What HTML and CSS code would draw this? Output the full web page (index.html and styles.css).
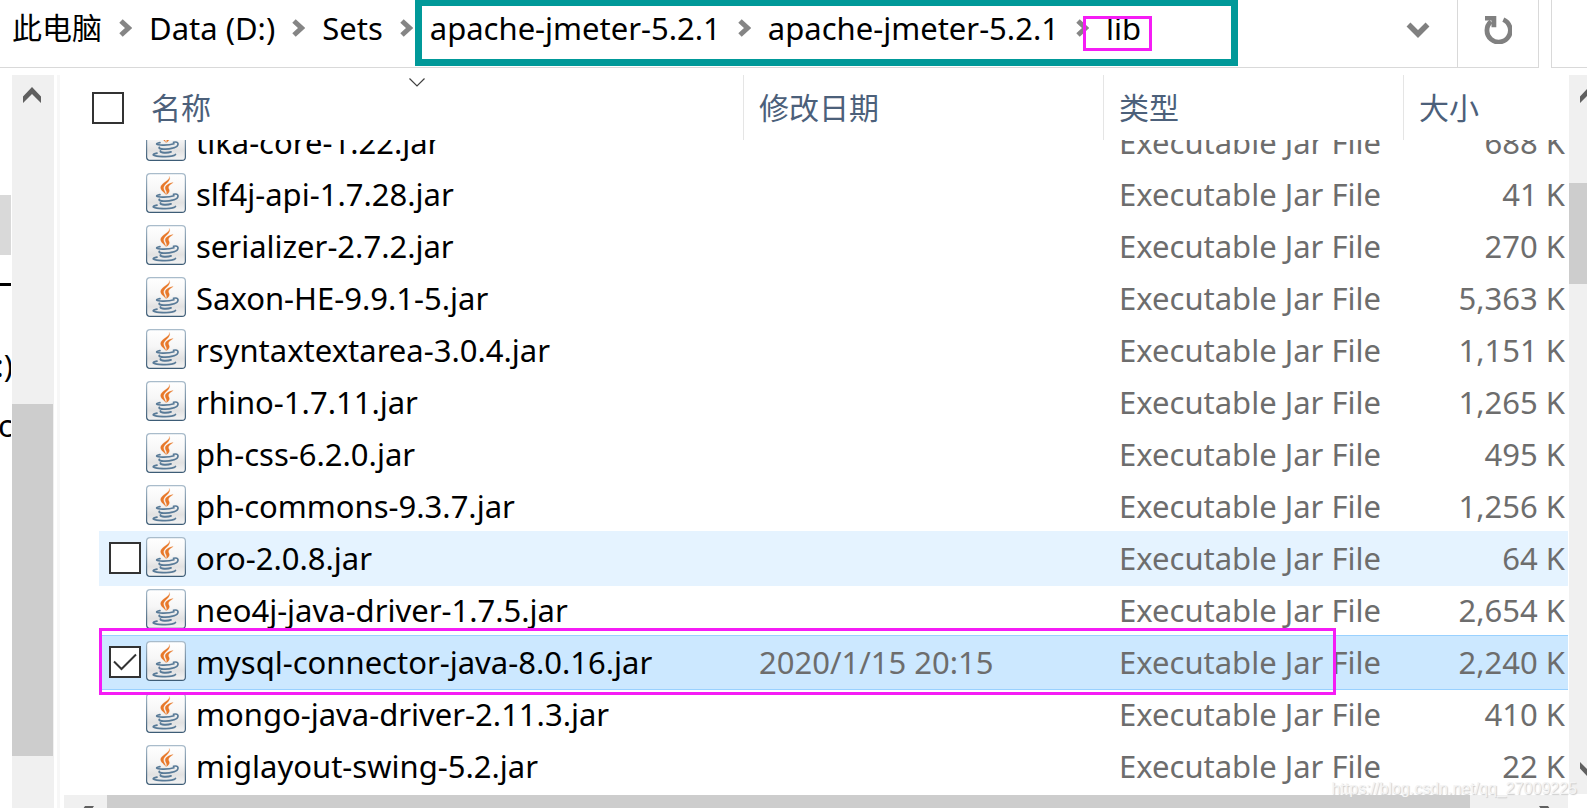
FILE: index.html
```html
<!DOCTYPE html>
<html lang="zh-CN">
<head>
<meta charset="utf-8">
<title>lib</title>
<link rel="stylesheet" href="styles.css">
</head>
<body>
<svg class="defs" aria-hidden="true">
  <defs>
    <linearGradient id="tile" x1="0" y1="0" x2="0" y2="1"><stop offset="0" stop-color="#ffffff"/><stop offset=".45" stop-color="#f6f6f6"/><stop offset=".75" stop-color="#e2e2e2"/><stop offset="1" stop-color="#f4f4f4"/></linearGradient>
    <linearGradient id="edge" x1="0" y1="0" x2="0" y2="1"><stop offset="0" stop-color="#a9bccb"/><stop offset="1" stop-color="#3d5c76"/></linearGradient>
    <symbol id="jar" viewBox="0 0 40 40">
      <rect x=".6" y=".6" width="38.8" height="38.8" rx="3.5" fill="url(#tile)" stroke="url(#edge)" stroke-width="1.2"/>
      <g fill="#e8782a" stroke="#e8782a" stroke-width=".2">
        <path d="M23.300 3.400c1.400 3.900-8.700 6.600-8.700 11 0 3 3.400 4.500 5.300 7.200-.9-3.200-2.500-4.900-2.300-7 .4-3.600 7.900-6.500 5.700-11.200z"/>
        <path d="M27.200 9.600c-4 .6-8 2.700-8 5.500 0 2.200 2.300 3.200 1.200 6.500 2.700-1.700 3.700-3.600 2.500-5.700-1.400-2.500 1.200-4.200 4.300-6.300z"/>
      </g>
      <g fill="none" stroke="#587a97" stroke-linecap="round">
        <path d="M14 21.600c-5.500 1-4 2.300 2.500 2.500 5 .1 8.500-.3 11.500-1.300" stroke-width="1.600"/>
        <path d="M27.500 21.300c5.800-1.600 6.200 4 .2 5.600" stroke-width="1.700"/>
        <path d="M13.300 26.400c-1 1.900 8 2.300 13.200.8" stroke-width="1.900"/>
        <path d="M14.500 30.100c-.8 1.900 7 2.200 10.500.8" stroke-width="1.900"/>
        <path d="M11 32.200c-6 1.100-4.500 2.800 2 3.200 6.500.4 15.500 0 16.500-2" stroke-width="1.700"/>
      </g>
    </symbol>
    <symbol id="crumb" viewBox="0 0 13 18"><path d="M2 2l7.500 7L2 16" fill="none" stroke="#858585" stroke-width="5"/></symbol>
    <symbol id="arrow" viewBox="0 0 18 16"><path d="M0 9.500L9 0l9 9.500V16L9 7l-9 9z" fill="#606060"/></symbol>
  </defs>
</svg>

<div class="window">
  <header class="toolbar">
    <nav class="address" aria-label="地址">
      <a href="#">此电脑</a><svg class="sep"><use href="#crumb"/></svg>
      <a href="#">Data (D:)</a><svg class="sep"><use href="#crumb"/></svg>
      <a href="#">Sets</a><svg class="sep"><use href="#crumb"/></svg>
      <a href="#">apache-jmeter-5.2.1</a><svg class="sep"><use href="#crumb"/></svg>
      <a href="#">apache-jmeter-5.2.1</a><svg class="sep"><use href="#crumb"/></svg>
      <a href="#">lib</a>
      <button class="history" type="button" aria-label="以前的位置"><svg width="24" height="17" viewBox="0 0 24 17"><path d="M2.500 2.500l9.500 9.500 9.500-9.500" fill="none" stroke="#808080" stroke-width="5.500"/></svg></button>
    </nav>
    <button class="refresh" type="button" aria-label="刷新"><svg width="28" height="28" viewBox="0 0 28 28"><path d="M19.300 3.600A11.700 11.700 0 1 1 7 5.500" fill="none" stroke="#808080" stroke-width="4.800"/><path d="M1 0h11.300v11.300H7.500V4.600H1z" fill="#808080"/></svg></button>
    <div class="search"></div>
  </header>

  <main class="content">
    <aside class="tree">
      <div class="tree-selected"></div>
      <div class="tree-line"></div>
      <div class="tree-label drive">:)</div>
      <div class="tree-label folder">c</div>
    </aside>
    <div class="vscroll left">
      <svg class="up" width="18" height="16"><use href="#arrow"/></svg>
      <div class="thumb"></div>
    </div>
    <div class="splitter"></div>

    <section class="files">
      <table>
        <thead>
          <tr>
            <th class="name"><input type="checkbox" aria-label="全选"><span>名称</span><svg class="sort" width="16" height="9" viewBox="0 0 16 9"><path d="M.5.500L8 8 15.500.5" fill="none" stroke="#404040" stroke-width="1.200"/></svg></th>
            <th>修改日期</th><th>类型</th><th>大小</th>
          </tr>
        </thead>
        <tbody>
          <tr><td class="name"><svg class="jar"><use href="#jar"/></svg>tika-core-1.22.jar</td><td></td><td>Executable Jar File</td><td class="size">688 K</td></tr>
          <tr><td class="name"><svg class="jar"><use href="#jar"/></svg>slf4j-api-1.7.28.jar</td><td></td><td>Executable Jar File</td><td class="size">41 K</td></tr>
          <tr><td class="name"><svg class="jar"><use href="#jar"/></svg>serializer-2.7.2.jar</td><td></td><td>Executable Jar File</td><td class="size">270 K</td></tr>
          <tr><td class="name"><svg class="jar"><use href="#jar"/></svg>Saxon-HE-9.9.1-5.jar</td><td></td><td>Executable Jar File</td><td class="size">5,363 K</td></tr>
          <tr><td class="name"><svg class="jar"><use href="#jar"/></svg>rsyntaxtextarea-3.0.4.jar</td><td></td><td>Executable Jar File</td><td class="size">1,151 K</td></tr>
          <tr><td class="name"><svg class="jar"><use href="#jar"/></svg>rhino-1.7.11.jar</td><td></td><td>Executable Jar File</td><td class="size">1,265 K</td></tr>
          <tr><td class="name"><svg class="jar"><use href="#jar"/></svg>ph-css-6.2.0.jar</td><td></td><td>Executable Jar File</td><td class="size">495 K</td></tr>
          <tr><td class="name"><svg class="jar"><use href="#jar"/></svg>ph-commons-9.3.7.jar</td><td></td><td>Executable Jar File</td><td class="size">1,256 K</td></tr>
          <tr class="hover"><td class="name"><input type="checkbox" aria-label="oro-2.0.8.jar"><svg class="jar"><use href="#jar"/></svg>oro-2.0.8.jar</td><td></td><td>Executable Jar File</td><td class="size">64 K</td></tr>
          <tr><td class="name"><svg class="jar"><use href="#jar"/></svg>neo4j-java-driver-1.7.5.jar</td><td></td><td>Executable Jar File</td><td class="size">2,654 K</td></tr>
          <tr class="selected"><td class="name"><span class="tick"><input type="checkbox" checked aria-label="mysql-connector-java-8.0.16.jar"><svg width="24" height="18" viewBox="0 0 24 18"><path d="M1 8.500l7.500 7.500L23 1.500" fill="none" stroke="#333" stroke-width="2"/></svg></span><svg class="jar"><use href="#jar"/></svg>mysql-connector-java-8.0.16.jar</td><td>2020/1/15 20:15</td><td>Executable Jar File</td><td class="size">2,240 K</td></tr>
          <tr><td class="name"><svg class="jar"><use href="#jar"/></svg>mongo-java-driver-2.11.3.jar</td><td></td><td>Executable Jar File</td><td class="size">410 K</td></tr>
          <tr><td class="name"><svg class="jar"><use href="#jar"/></svg>miglayout-swing-5.2.jar</td><td></td><td>Executable Jar File</td><td class="size">22 K</td></tr>
        </tbody>
      </table>
      <div class="hscroll">
        <svg width="18" height="16" viewBox="0 0 18 16"><path d="M3 0h9l-6 9 6 7H3L-3 9z" fill="#606060"/></svg>
        <div class="thumb"></div>
        <svg width="18" height="16" viewBox="0 0 18 16"><path d="M7 0h9l6 9-6 7H7l6-7z" fill="#606060"/></svg>
      </div>
    </section>

    <div class="vscroll right">
      <svg class="up" width="18" height="16"><use href="#arrow"/></svg>
      <div class="thumb"></div>
      <svg class="down" width="18" height="16"><use href="#arrow"/></svg>
    </div>
  </main>

  <div class="mark mark-path"></div>
  <div class="mark mark-lib"></div>
  <div class="mark mark-row"></div>
  <div class="watermark">https://blog.csdn.net/qq_27009225</div>
</div>
</body>
</html>
```

FILE: styles.css
```css
* { box-sizing: border-box; }

body {
  margin: 0;
  overflow: hidden;
  background: #fff;
  color: #000;
  font: 31px/40px "Noto Sans", "Noto Sans CJK SC", sans-serif;
}

button { padding: 0; border: 0; background: none; }
svg { display: block; flex: none; }
.defs { position: absolute; width: 0; height: 0; }

.window {
  position: relative;
  display: flex;
  flex-direction: column;
  height: 100vh;
  overflow: hidden;
}

/* Address bar */
.toolbar { display: flex; flex: none; height: 68px; }

.address {
  display: flex;
  flex: 1;
  align-items: center;
  gap: 17px;
  padding: 0 27px 11px 12px;
  border-bottom: 1px solid #d9d9d9;
  white-space: nowrap;
}
.address a { color: #000; text-decoration: none; }
.address a:first-child { font-size: 30px; }
.sep { width: 13px; height: 18px; margin-top: -1px; }
.history { margin: 4px 0 0 auto; }

.refresh {
  display: flex;
  justify-content: center;
  width: 82px;
  padding-top: 16px;
  border: solid #d9d9d9;
  border-width: 0 1px 1px;
}

.search {
  width: 36px;
  margin-left: 12px;
  border: solid #d9d9d9;
  border-width: 0 0 1px 1px;
}

/* Panes */
.content { display: flex; flex: 1; min-height: 0; padding-top: 7px; }

.tree { flex: none; width: 11px; margin-right: 1px; overflow: hidden; }
.tree-selected { height: 60px; margin-top: 120px; background: #d9d9d9; }
.tree-line { height: 3px; margin-top: 28px; background: #000; }
.tree-label { display: flex; justify-content: flex-end; margin-right: -2px; }
.drive { margin-top: 59px; }
.folder { margin-top: 20px; }

.vscroll { display: flex; flex: none; flex-direction: column; background: #f0f0f0; }
.vscroll .up { margin: 12px 0 0 11px; }
.vscroll .thumb { background: #cdcdcd; }
.left { width: 42px; }
.left .thumb { width: 41px; height: 352px; margin-top: 301px; }
.splitter { flex: none; width: 3px; margin: 0 4px 0 3px; background: #f7f7f7; }

.right { width: 18px; margin: 0 0 14px 1px; overflow: hidden; }
.right .thumb { height: 101px; margin-top: 80px; }
.right .down { margin: auto 0 16px 11px; transform: rotate(180deg); }

/* File list */
.files { display: flex; flex: 1; flex-direction: column; min-width: 0; }

table { display: block; flex: 1; min-height: 0; overflow: hidden; }
thead, tbody { display: block; }
tbody { overflow: hidden; }

tr { display: grid; grid-template-columns: 1fr 360px 300px 165px; }
th, td { display: flex; align-items: center; padding: 0 0 0 16px; white-space: nowrap; }

thead tr { height: 65px; }
th {
  padding-left: 15px;
  border-left: 1px solid #e5e5e5;
  color: #4c607a;
  font-size: 30px;
  font-weight: 400;
}
th.name { position: relative; gap: 27px; padding-left: 28px; border: 0; }
.sort { position: absolute; top: 3px; right: 318px; }

tbody tr {
  height: 55px;
  margin: 0 0 -3px 35px;
  border: solid transparent;
  border-width: 1px 0;
}
tbody tr:first-child { margin-top: -25px; }
td { color: #6d6d6d; padding-bottom: 2px; }
td.name { justify-content: flex-start; padding-left: 10px; color: #000; }
td.size { justify-content: flex-end; padding-right: 3px; }

.jar { width: 40px; height: 40px; margin: 0 10px 1px 37px; }
.hover .jar, .selected .jar { margin-left: 5px; }
.hover { background: #e5f3ff; }
.selected { border-color: #99d1ff; background: #cce8ff; }

input[type="checkbox"] {
  flex: none;
  width: 32px;
  height: 32px;
  margin: 0;
  border: 2px solid #333;
  background: #fff;
  appearance: none;
}
.tick { display: grid; place-items: center; }
.tick > * { grid-area: 1 / 1; }

.hscroll {
  display: flex;
  flex: none;
  justify-content: space-between;
  height: 13px;
  padding: 0 18px;
  overflow: hidden;
  background: #f0f0f0;
}
.hscroll svg { margin-top: 11px; }
.hscroll .thumb { flex: 1; margin: 0 62px 0 7px; background: #cdcdcd; }

/* Highlight frames drawn over the window */
.mark { position: absolute; pointer-events: none; border: 3px solid #f51cf5; }
.mark-path { top: 0; left: 415px; width: 823px; height: 66px; border: solid #009999; border-width: 6px 7px 7px; }
.mark-lib { top: 16px; left: 1083px; width: 69px; height: 35px; }
.mark-row { top: 628px; left: 99px; width: 1237px; height: 67px; }

.watermark {
  position: absolute;
  right: 10px;
  bottom: 9px;
  color: #f4f4f4;
  font: 16px/20px "Liberation Sans", sans-serif;
  text-shadow: 1px 1px 1px #ccc;
}
```
